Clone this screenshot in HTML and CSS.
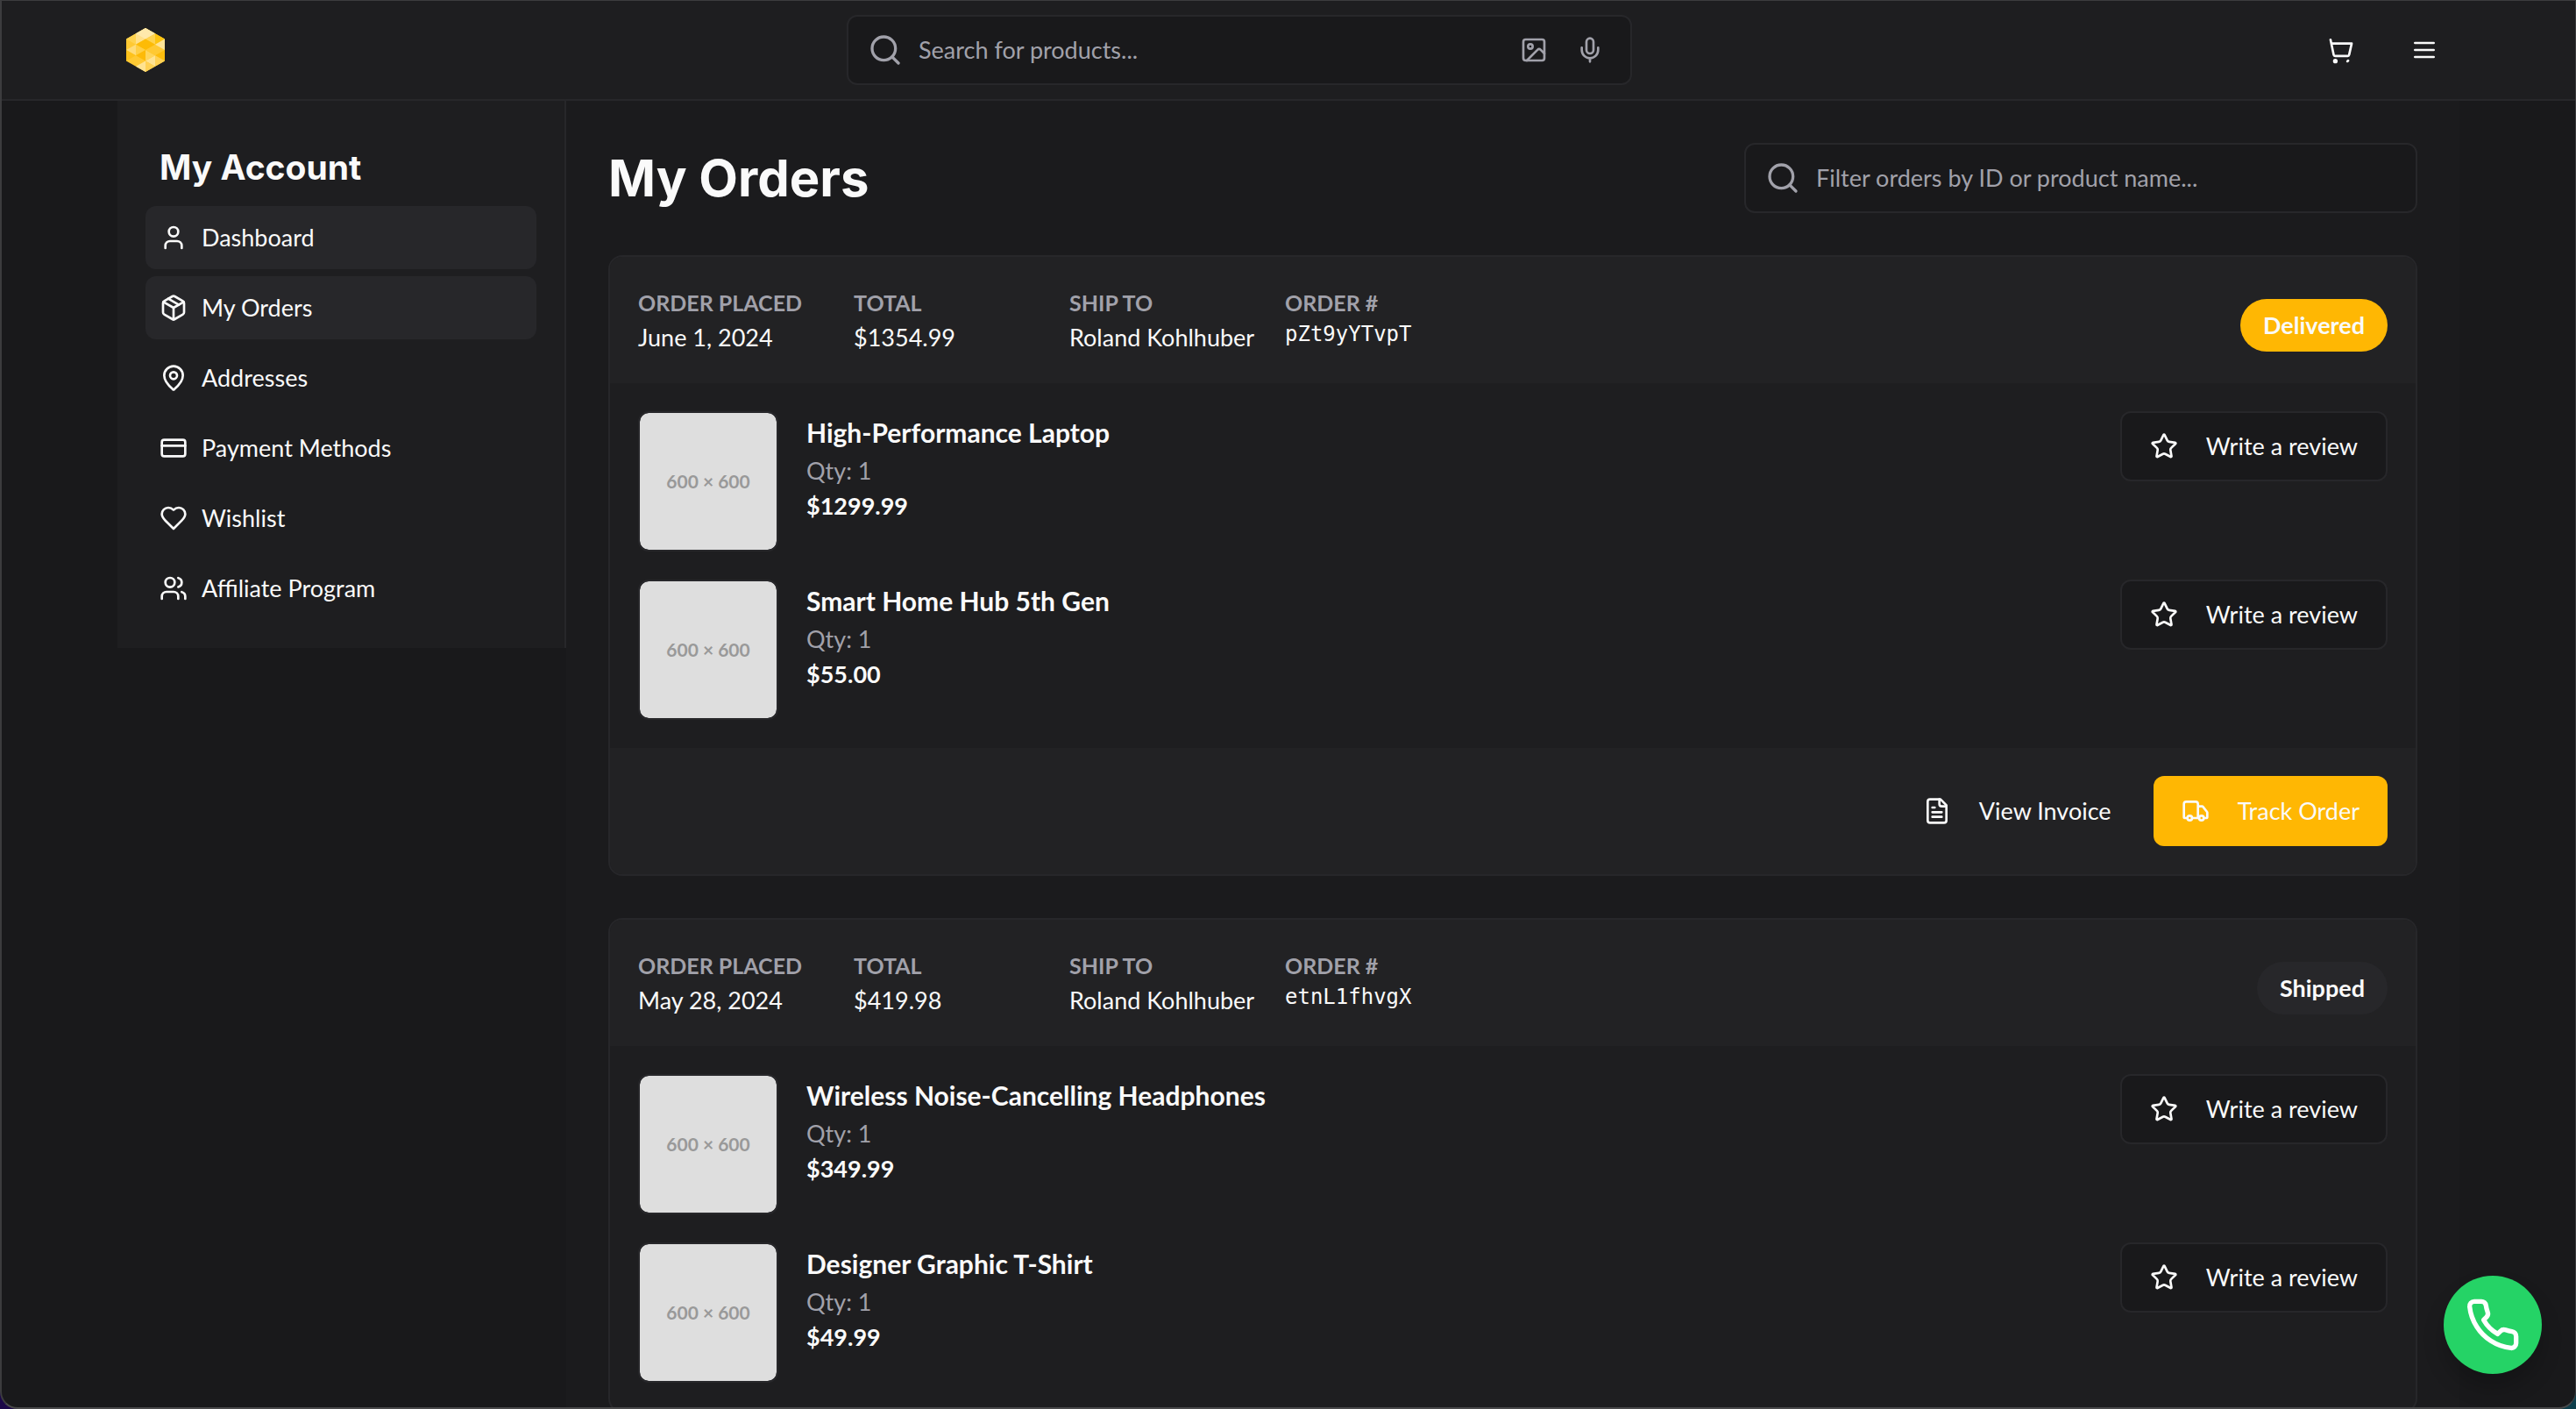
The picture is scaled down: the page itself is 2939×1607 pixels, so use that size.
FILE: index.html
```html
<!DOCTYPE html>
<html lang="en">
<head>
<meta charset="utf-8">
<meta name="viewport" content="width=device-width, initial-scale=1">
<title>My Orders</title>
<link rel="stylesheet" href="styles.css">
</head>
<body>
<svg class="sprite" aria-hidden="true">
  <symbol id="i-search" viewBox="0 0 24 24"><circle cx="11" cy="11" r="8"/><path d="m21 21-4.3-4.3"/></symbol>
  <symbol id="i-image" viewBox="0 0 24 24"><rect x="3" y="3" width="18" height="18" rx="2"/><circle cx="9" cy="9" r="2"/><path d="m21 15-3.086-3.086a2 2 0 0 0-2.828 0L6 21"/></symbol>
  <symbol id="i-mic" viewBox="0 0 24 24"><path d="M12 2a3 3 0 0 0-3 3v7a3 3 0 0 0 6 0V5a3 3 0 0 0-3-3Z"/><path d="M19 10v2a7 7 0 0 1-14 0v-2M12 19v3"/></symbol>
  <symbol id="i-menu" viewBox="0 0 24 24"><path d="M4 6h16M4 12h16M4 18h16"/></symbol>
  <symbol id="i-cart" viewBox="0 0 24 24"><path d="M2.2 3.2 4.9 16.2a1.2 1.2 0 0 0 1.2 1h10.800a1.200 1.200 0 0 0 1.200-1L20.300 6.500H3"/><circle cx="6.300" cy="21.500" r="1"/><path d="m16.600 21.700.7-.6"/></symbol>
  <symbol id="i-user" viewBox="0 0 24 24"><path d="M19 21v-2a4 4 0 0 0-4-4H9a4 4 0 0 0-4 4v2"/><circle cx="12" cy="7" r="4"/></symbol>
  <symbol id="i-package" viewBox="0 0 24 24"><path d="m7.500 4.270 9 5.150"/><path d="M21 8a2 2 0 0 0-1-1.730l-7-4a2 2 0 0 0-2 0l-7 4A2 2 0 0 0 3 8v8a2 2 0 0 0 1 1.730l7 4a2 2 0 0 0 2 0l7-4A2 2 0 0 0 21 16Z"/><path d="m3.300 7 8.700 5 8.700-5M12 22V12"/></symbol>
  <symbol id="i-pin" viewBox="0 0 24 24"><path d="M20 10c0 4.993-5.539 10.193-7.399 11.799a1 1 0 0 1-1.202 0C9.539 20.193 4 14.993 4 10a8 8 0 0 1 16 0"/><circle cx="12" cy="10" r="3"/></symbol>
  <symbol id="i-card" viewBox="0 0 24 24"><rect x="2" y="5" width="20" height="14" rx="2"/><path d="M2 10h20"/></symbol>
  <symbol id="i-heart" viewBox="0 0 24 24"><path d="M19 14c1.490-1.460 3-3.210 3-5.500A5.500 5.500 0 0 0 16.500 3c-1.760 0-3 .5-4.500 2-1.500-1.500-2.740-2-4.500-2A5.500 5.500 0 0 0 2 8.500c0 2.300 1.500 4.050 3 5.500l7 7Z"/></symbol>
  <symbol id="i-users" viewBox="0 0 24 24"><path d="M16 21v-2a4 4 0 0 0-4-4H6a4 4 0 0 0-4 4v2"/><circle cx="9" cy="7" r="4"/><path d="M22 21v-2a4 4 0 0 0-3-3.870M16 3.130a4 4 0 0 1 0 7.750"/></symbol>
  <symbol id="i-star" viewBox="0 0 24 24"><path d="M11.525 2.295a.53.53 0 0 1 .95 0l2.310 4.679a2.123 2.123 0 0 0 1.595 1.160l5.166.756a.53.53 0 0 1 .294.904l-3.736 3.638a2.123 2.123 0 0 0-.611 1.878l.882 5.140a.53.53 0 0 1-.771.560l-4.618-2.428a2.122 2.122 0 0 0-1.973 0L6.396 21.010a.53.53 0 0 1-.770-.560l.881-5.139a2.122 2.122 0 0 0-.611-1.879L2.160 9.795a.53.53 0 0 1 .294-.906l5.165-.755a2.122 2.122 0 0 0 1.597-1.160z"/></symbol>
  <symbol id="i-file" viewBox="0 0 24 24"><path d="M15 2H6a2 2 0 0 0-2 2v16a2 2 0 0 0 2 2h12a2 2 0 0 0 2-2V7Z"/><path d="M14 2v4a2 2 0 0 0 2 2h4M10 9H8M16 13H8M16 17H8"/></symbol>
  <symbol id="i-truck" viewBox="0 0 24 24"><path d="M14 18V6a2 2 0 0 0-2-2H4a2 2 0 0 0-2 2v11a1 1 0 0 0 1 1h2M15 18H9M19 18h2a1 1 0 0 0 1-1v-3.650a1 1 0 0 0-.220-.624l-3.480-4.350A1 1 0 0 0 17.520 8H14"/><circle cx="17" cy="18" r="2"/><circle cx="7" cy="18" r="2"/></symbol>
  <symbol id="i-phone" viewBox="0 0 24 24"><path d="M22 16.920v3a2 2 0 0 1-2.180 2 19.790 19.790 0 0 1-8.630-3.070 19.500 19.500 0 0 1-6-6 19.790 19.790 0 0 1-3.070-8.670A2 2 0 0 1 4.110 2h3a2 2 0 0 1 2 1.720 12.840 12.840 0 0 0 .7 2.810 2 2 0 0 1-.45 2.110L8.090 9.910a16 16 0 0 0 6 6l1.270-1.270a2 2 0 0 1 2.110-.45 12.840 12.840 0 0 0 2.810.7A2 2 0 0 1 22 16.920z"/></symbol>
</svg>

<header class="topbar">
  <a class="logo" href="#" aria-label="Home">
    <svg viewBox="0 0 44 50" width="44" height="50" shape-rendering="geometricPrecision">
      <path fill="#ffc933" d="M22 0 44 12.500v25L22 50 0 37.500v-25z"/>
      <path fill="#ffe08a" d="M22 0 11 6.250v12.500L33 6.250z"/>
      <path fill="#ffe9ab" d="M22 0 11 6.250 22 12.500 33 6.250z"/>
      <path fill="#ffd34f" d="M0 12.500 11 6.250v12.500zM33 6.250v12.500L22 12.500z"/>
      <path fill="#fec40f" d="M33 6.250 44 12.500 33 18.750z"/>
      <path fill="#ffe497" d="M44 12.500v12.500L33 18.750z"/>
      <path fill="#fdbb06" d="M22 12.500 33 18.750 22 25 11 18.750z"/>
      <path fill="#ffdc78" d="M0 25 11 18.750v12.500z"/>
      <path fill="#ffcf45" d="M11 18.750 22 25 11 31.250z"/>
      <path fill="#fec21b" d="M0 25 11 31.250 0 37.500z"/>
      <path fill="#fdba08" d="M22 25v12.500L11 31.250zM33 31.250 22 25v12.500z"/>
      <path fill="#ffd55a" d="M22 25 33 31.250 22 37.500z"/>
      <path fill="#fdbd0d" d="M44 25v12.500L33 31.250z"/>
      <path fill="#ffe392" d="M22 37.500 33 31.250v12.500zM22 37.500V50L11 43.750z"/>
      <path fill="#ffd154" d="M33 31.250 44 37.500 33 43.750zM22 37.500 33 43.750 22 50z"/>
    </svg>
  </a>
  <form class="field search" role="search">
    <svg class="icon icon-lg"><use href="#i-search"/></svg>
    <input type="search" aria-label="Search for products" placeholder="Search for products...">
    <button class="icon-btn" type="button" aria-label="Search by image"><svg class="icon"><use href="#i-image"/></svg></button>
    <button class="icon-btn" type="button" aria-label="Search by voice"><svg class="icon"><use href="#i-mic"/></svg></button>
  </form>
  <div class="actions">
    <button class="icon-btn" type="button" aria-label="Cart"><svg class="icon"><use href="#i-cart"/></svg></button>
    <button class="icon-btn" type="button" aria-label="Menu"><svg class="icon"><use href="#i-menu"/></svg></button>
  </div>
</header>

<div class="layout">
  <aside class="sidebar">
    <h2>My Account</h2>
    <nav aria-label="Account">
      <a class="active" href="#"><svg class="icon"><use href="#i-user"/></svg>Dashboard</a>
      <a class="active" href="#" aria-current="page"><svg class="icon"><use href="#i-package"/></svg>My Orders</a>
      <a href="#"><svg class="icon"><use href="#i-pin"/></svg>Addresses</a>
      <a href="#"><svg class="icon"><use href="#i-card"/></svg>Payment Methods</a>
      <a href="#"><svg class="icon"><use href="#i-heart"/></svg>Wishlist</a>
      <a href="#"><svg class="icon"><use href="#i-users"/></svg>Affiliate Program</a>
    </nav>
  </aside>

  <main>
    <div class="page-head">
      <h1>My Orders</h1>
      <div class="field filter">
        <svg class="icon icon-lg"><use href="#i-search"/></svg>
        <input type="search" aria-label="Filter orders" placeholder="Filter orders by ID or product name...">
      </div>
    </div>

    <article class="order">
      <header class="band">
        <dl>
          <div><dt>ORDER PLACED</dt><dd>June 1, 2024</dd></div>
          <div><dt>TOTAL</dt><dd>$1354.99</dd></div>
          <div><dt>SHIP TO</dt><dd>Roland Kohlhuber</dd></div>
          <div><dt>ORDER #</dt><dd class="mono">pZt9yYTvpT</dd></div>
        </dl>
        <span class="badge badge-primary">Delivered</span>
      </header>
      <ul class="items">
        <li>
          <div class="thumb">600 × 600</div>
          <div class="info"><h3>High-Performance Laptop</h3><p>Qty: 1</p><strong>$1299.99</strong></div>
          <button class="btn btn-outline" type="button"><svg class="icon"><use href="#i-star"/></svg>Write a review</button>
        </li>
        <li>
          <div class="thumb">600 × 600</div>
          <div class="info"><h3>Smart Home Hub 5th Gen</h3><p>Qty: 1</p><strong>$55.00</strong></div>
          <button class="btn btn-outline" type="button"><svg class="icon"><use href="#i-star"/></svg>Write a review</button>
        </li>
      </ul>
      <footer class="band">
        <button class="btn" type="button"><svg class="icon"><use href="#i-file"/></svg>View Invoice</button>
        <button class="btn btn-primary" type="button"><svg class="icon"><use href="#i-truck"/></svg>Track Order</button>
      </footer>
    </article>

    <article class="order">
      <header class="band">
        <dl>
          <div><dt>ORDER PLACED</dt><dd>May 28, 2024</dd></div>
          <div><dt>TOTAL</dt><dd>$419.98</dd></div>
          <div><dt>SHIP TO</dt><dd>Roland Kohlhuber</dd></div>
          <div><dt>ORDER #</dt><dd class="mono">etnL1fhvgX</dd></div>
        </dl>
        <span class="badge">Shipped</span>
      </header>
      <ul class="items">
        <li>
          <div class="thumb">600 × 600</div>
          <div class="info"><h3>Wireless Noise-Cancelling Headphones</h3><p>Qty: 1</p><strong>$349.99</strong></div>
          <button class="btn btn-outline" type="button"><svg class="icon"><use href="#i-star"/></svg>Write a review</button>
        </li>
        <li>
          <div class="thumb">600 × 600</div>
          <div class="info"><h3>Designer Graphic T-Shirt</h3><p>Qty: 1</p><strong>$49.99</strong></div>
          <button class="btn btn-outline" type="button"><svg class="icon"><use href="#i-star"/></svg>Write a review</button>
        </li>
      </ul>
    </article>
  </main>
</div>

<button class="call" type="button" aria-label="Call us"><svg class="icon"><use href="#i-phone"/></svg></button>
</body>
</html>
```
FILE: styles.css
```css
:root {
  --bg: #19191b;
  --surface: #1b1b1d;
  --card: #1e1e20;
  --band: #222224;
  --line: #27272a;
  --text: #fafafa;
  --muted: #a1a1aa;
  --primary: #ffb703;
  --sans: Lato, "Open Sans", sans-serif;
  --display: Inter, "Liberation Sans", sans-serif;
  --mono: "DejaVu Sans Mono", monospace;
}

* { box-sizing: border-box; margin: 0; padding: 0; }

html { overflow: hidden; background: linear-gradient(90deg, #1b0748, #0e3f4c); }

body {
  height: 100vh;
  overflow: hidden;
  border: 1px solid #3c3c3e;
  border-width: 1px 1px 2px 2px;
  border-bottom-color: #4a4a4b;
  border-radius: 0 0 20px 20px;
  background: var(--bg);
  color: var(--text);
  font: 27px/40px var(--sans);
}

a { color: inherit; text-decoration: none; }
ul { list-style: none; }
button, input { font: inherit; color: inherit; background: none; border: 0; }
button { cursor: pointer; }

.sprite { position: absolute; width: 0; height: 0; }

.icon {
  flex: none;
  width: 32px;
  height: 32px;
  fill: none;
  stroke: currentColor;
  stroke-width: 2;
  stroke-linecap: round;
  stroke-linejoin: round;
}
.icon-lg { width: 40px; height: 40px; }

.icon-btn { display: grid; place-items: center; width: 64px; height: 64px; }

.topbar {
  display: flex;
  justify-content: space-between;
  align-items: center;
  padding: 16px 140px 16px 142px;
  background: var(--card);
  border-bottom: 2px solid var(--line);
}
.logo svg { display: block; }
.search { flex: 0 1 896px; }

.field {
  display: flex;
  align-items: center;
  height: 80px;
  padding: 0 14px 0 22px;
  border: 2px solid var(--line);
  border-radius: 12px;
  background: var(--bg);
  color: var(--muted);
}
.field input { flex: 1; min-width: 0; padding-left: 18px; outline: 0; }
.field input::placeholder { color: var(--muted); opacity: 1; }

.actions { display: flex; gap: 30px; }

.layout {
  display: grid;
  grid-template-columns: 512px minmax(0, 1fr);
  align-items: start;
  margin: 0 132px;
}

.sidebar { padding: 48px 32px 32px; background: var(--card); border-right: 2px solid var(--line); }
.sidebar h2 { padding: 0 16px 16px; font: 700 39px/56px var(--display); }
.sidebar nav { display: grid; gap: 8px; }
.sidebar a {
  display: flex;
  align-items: center;
  gap: 16px;
  padding: 16px;
  border-radius: 12px;
}
.sidebar .active { background: var(--line); }

main { display: grid; gap: 48px; padding: 48px; background: var(--surface); }

.page-head { display: flex; justify-content: space-between; align-items: center; }
.page-head h1 { font: 700 58px/72px var(--display); }
.filter { width: 768px; }

.order { overflow: hidden; border: 2px solid var(--line); border-radius: 16px; background: var(--card); }
.band { display: flex; justify-content: space-between; align-items: center; padding: 32px; background: var(--band); }
footer.band { justify-content: flex-end; gap: 16px; }

.band dl { display: grid; grid-template-columns: repeat(4, 214px); gap: 32px; white-space: nowrap; }
.band dt { font-size: 25px; font-weight: 700; color: var(--muted); }
.band .mono { font: 24px/32px var(--mono); }

.badge {
  margin-top: 12px;
  padding: 10px 26px;
  border-radius: 30px;
  background: var(--line);
  font-weight: 700;
}
.badge-primary { background: var(--primary); }

.items { display: grid; gap: 32px; padding: 32px; }
.items li { display: flex; align-items: flex-start; gap: 32px; }
.thumb {
  display: grid;
  place-items: center;
  width: 160px;
  height: 160px;
  border: 2px solid var(--line);
  border-radius: 12px;
  background: #dedede;
  background-clip: padding-box;
  color: #999;
  font: 700 21px/32px Lato, sans-serif;
}
.info { flex: 1; }
.info h3 { font-size: 30px; line-height: 48px; }
.info p { color: var(--muted); }
.info strong { display: block; }

.btn { display: flex; align-items: center; gap: 32px; height: 80px; padding: 0 32px; border-radius: 12px; }
.btn-outline { border: 2px solid var(--line); background: var(--bg); }
.btn-primary { background: var(--primary); }

.call {
  position: fixed;
  right: 39px;
  bottom: 40px;
  display: grid;
  place-items: center;
  width: 112px;
  height: 112px;
  border-radius: 50%;
  background: #25d366;
  color: #fff;
  box-shadow: 0 16px 24px rgb(0 0 0 / 20%);
}
.call .icon { width: 64px; height: 64px; }
```
